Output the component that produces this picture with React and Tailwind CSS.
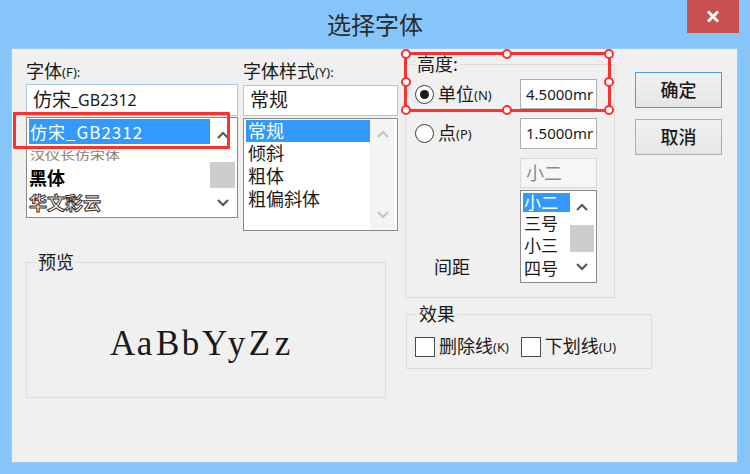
import React from 'react';

const UI_FONT = "[font-family:'Noto_Sans','Noto_Sans_CJK_SC',sans-serif]";

const Arrow = ({ up, color = '#555' }) => (
  <svg width="14" height="10" viewBox="0 0 14 10">
    <polyline
      points={up ? '2,8 7,3 12,8' : '2,2 7,7 12,2'}
      fill="none"
      stroke={color}
      strokeWidth="2"
    />
  </svg>
);

const Handle = ({ className }) => (
  <span className={`absolute w-[10px] h-[10px] rounded-full bg-white border-2 border-[#ff2d2d] ${className}`} />
);

const Radio = ({ checked }) => (
  <span className="w-[19px] h-[19px] rounded-full border border-[#3d3d3d] bg-white flex items-center justify-center shrink-0">
    {checked && <span className="w-[9px] h-[9px] rounded-full bg-[#1a1a1a]" />}
  </span>
);

const Checkbox = () => (
  <span className="block w-[20px] h-[20px] border border-[#4a4a4a] bg-white shrink-0" />
);

const App = () => {
  return (
    <div className={`relative w-[750px] h-[474px] bg-[#86c5fa] flex flex-col overflow-hidden ${UI_FONT}`}>
      {/* Title bar */}
      <div className="h-[48px] flex items-center justify-center">
        <span className="text-[24px] text-[#2b2b2b] leading-none mt-[2px]">选择字体</span>
      </div>
      <div className="absolute right-[11px] top-0 w-[52px] h-[33px] bg-[#c75050] flex items-center justify-center">
        <svg width="14" height="13" viewBox="0 0 14 13">
          <path d="M2 1.5 L12 11.5 M12 1.5 L2 11.5" stroke="#fff" strokeWidth="3" />
        </svg>
      </div>

      {/* Dialog body */}
      <div className="ml-[11px] mr-[12px] h-[415px] bg-[#f0f0f0] border border-[#9cc8ef] flex">
        {/* Left area */}
        <div className="ml-[14px] pt-[11px] flex flex-col">
          <div className="flex gap-[5px]">
            {/* Font column */}
            <div className="w-[212px] flex flex-col">
              <div className="h-[22px] flex items-end text-[#1a1a1a]">
                <span className="text-[18px] leading-[22px]">字体</span>
                <span className="text-[13px] leading-[20px]">(F):</span>
              </div>
              <div className="mt-[2px] h-[32px] bg-white border border-[#a8c8e8] flex items-center pl-[6px] text-[#1a1a1a]">
                <span className="text-[19px]">仿宋</span>
                <span className="text-[16px]">_GB2312</span>
              </div>
              <div className="mt-[1px] h-[101px] bg-white border border-[#8a8a8a] flex">
                <div className="flex-1 pl-[2px] pt-[1px] flex flex-col">
                  <div className="h-[25px] bg-[#3399ff] text-white flex items-center pl-[1px] text-[17px] [font-family:'Noto_Sans_CJK_SC','Liberation_Mono',monospace] tracking-[1px]">
                    仿宋_GB2312
                  </div>
                  <div className="h-[22px] flex items-center text-[15px] text-[#8a7a6a] scale-y-75 origin-left pl-[1px]">
                    汉仪长仿宋体
                  </div>
                  <div className="h-[25px] flex items-center text-[18px] font-semibold text-black">黑体</div>
                  <div className="h-[24px] flex items-center text-[18px] font-bold text-white [-webkit-text-stroke:1px_#3a2a1a]">
                    华文彩云
                  </div>
                </div>
                <div className="w-[25px] mr-[2px] flex flex-col items-center">
                  <div className="h-[30px] flex items-center justify-center mt-[2px]">
                    <Arrow up />
                  </div>
                  <div className="mt-[12px] w-full h-[26px] bg-[#cdcdcd]" />
                  <div className="flex-1 flex items-center justify-center">
                    <Arrow />
                  </div>
                </div>
              </div>
            </div>

            {/* Style column */}
            <div className="w-[155px] flex flex-col">
              <div className="h-[22px] flex items-end text-[#1a1a1a]">
                <span className="text-[18px] leading-[22px]">字体样式</span>
                <span className="text-[13px] leading-[20px]">(Y):</span>
              </div>
              <div className="mt-[3px] h-[31px] bg-white border border-[#a8c8e8] flex items-center pl-[6px] text-[19px] text-[#1a1a1a]">
                常规
              </div>
              <div className="mt-[2px] h-[113px] bg-white border border-[#8a8a8a] flex">
                <div className="flex-1 pl-[2px] pt-[1px] flex flex-col text-[18px] text-[#1a1a1a]">
                  <div className="h-[22px] bg-[#3399ff] text-white flex items-center pl-[2px]">常规</div>
                  <div className="h-[23px] flex items-center pl-[2px]">倾斜</div>
                  <div className="h-[23px] flex items-center pl-[2px]">粗体</div>
                  <div className="h-[23px] flex items-center pl-[2px]">粗偏斜体</div>
                </div>
                <div className="w-[25px] mr-[2px] bg-[#f4f4f4] flex flex-col items-center justify-between py-[10px]">
                  <Arrow up color="#c2c2c2" />
                  <Arrow color="#c2c2c2" />
                </div>
              </div>
            </div>
          </div>

          {/* Preview */}
          <fieldset className="mt-[20px] w-[360px] h-[147px] border border-[#dcdcdc]">
            <legend className="ml-[9px] px-[2px] text-[18px] leading-[22px] text-[#1a1a1a]">预览</legend>
            <div className="h-[118px] flex items-center justify-center">
              <div className="flex mr-[8px] mt-[22px] text-[35px] leading-none text-[#1a1a1a] [font-family:'Liberation_Serif',serif]">
                {'AaBbYyZz'.split('').map((c, i) => (
                  <span key={i} className="w-[23px] text-center">{c}</span>
                ))}
              </div>
            </div>
          </fieldset>
        </div>

        {/* Right area */}
        <div className="ml-[7px] pt-[4px] flex flex-col">
          <div className="flex">
            {/* Height group */}
            <fieldset className="w-[210px] h-[245px] border border-[#dcdcdc] flex flex-col pl-[9px]">
              <legend className="ml-[0px] px-[2px] text-[18px] leading-[22px] text-[#1a1a1a]">高度:</legend>
              <div className="mt-[4px] flex items-center h-[30px]">
                <div className="w-[105px] flex items-center gap-[4px]">
                  <Radio checked />
                  <span className="text-[18px] text-[#1a1a1a]">单位</span>
                  <span className="text-[13px] text-[#1a1a1a] mt-[3px] ml-[-4px]">(N)</span>
                </div>
                <div className="w-[77px] h-[30px] bg-white border border-[#abadb3] flex items-center pl-[5px] whitespace-nowrap text-[15px] text-[#1a1a1a]">
                  4.5000mr
                </div>
              </div>
              <div className="mt-[9px] flex items-center h-[31px]">
                <div className="w-[105px] flex items-center gap-[4px]">
                  <Radio />
                  <span className="text-[18px] text-[#1a1a1a]">点</span>
                  <span className="text-[13px] text-[#1a1a1a] mt-[3px] ml-[-4px]">(P)</span>
                </div>
                <div className="w-[77px] h-[31px] bg-white border border-[#abadb3] flex items-center pl-[5px] whitespace-nowrap text-[15px] text-[#1a1a1a]">
                  1.5000mr
                </div>
              </div>
              <div className="mt-[9px] ml-[105px] w-[77px] h-[30px] bg-[#f6f6f6] border border-[#d9d9d9] flex items-center pl-[5px] text-[18px] text-[#8c8c8c]">
                小二
              </div>
              <div className="mt-[2px] flex items-end">
                <div className="w-[105px] pl-[19px] pb-[2px] text-[18px] text-[#1a1a1a]">间距</div>
                <div className="w-[77px] h-[93px] bg-white border border-[#8a8a8a] flex">
                  <div className="flex-1 pl-[2px] pt-[2px] flex flex-col text-[17px] text-[#1a1a1a]">
                    <div className="h-[19px] bg-[#3399ff] text-white flex items-center pl-[1px] leading-none">小二</div>
                    <div className="h-[23px] flex items-center pl-[1px]">三号</div>
                    <div className="h-[22px] flex items-center pl-[1px]">小三</div>
                    <div className="h-[23px] flex items-center pl-[1px]">四号</div>
                  </div>
                  <div className="w-[24px] mr-[2px] flex flex-col items-center">
                    <div className="h-[28px] flex items-center justify-center mt-[2px]">
                      <Arrow up />
                    </div>
                    <div className="mt-[4px] w-full h-[27px] bg-[#cdcdcd]" />
                    <div className="flex-1 flex items-center justify-center">
                      <Arrow />
                    </div>
                  </div>
                </div>
              </div>
            </fieldset>

            {/* Buttons */}
            <div className="ml-[20px] mt-[19px] flex flex-col gap-[11px]">
              <button className="w-[87px] h-[36px] border border-[#4a9de6] bg-gradient-to-b from-[#f2f2f2] to-[#e5e5e5] text-[18px] text-[#1a1a1a] font-medium">
                确定
              </button>
              <button className="w-[87px] h-[36px] border border-[#adadad] bg-gradient-to-b from-[#f2f2f2] to-[#e5e5e5] text-[18px] text-[#1a1a1a] font-medium">
                取消
              </button>
            </div>
          </div>

          {/* Effects */}
          <fieldset className="mt-[5px] ml-[1px] w-[246px] h-[66px] border border-[#dcdcdc] pl-[8px]">
            <legend className="ml-[2px] px-[2px] text-[18px] leading-[22px] text-[#1a1a1a]">效果</legend>
            <div className="mt-[8px] flex items-center">
              <Checkbox />
              <span className="ml-[4px] text-[18px] text-[#1a1a1a]">删除线</span>
              <span className="text-[13px] text-[#1a1a1a] mt-[3px]">(K)</span>
              <span className="ml-[12px] flex">
                <Checkbox />
              </span>
              <span className="ml-[4px] text-[18px] text-[#1a1a1a]">下划线</span>
              <span className="text-[13px] text-[#1a1a1a] mt-[3px]">(U)</span>
            </div>
          </fieldset>
        </div>
      </div>

      {/* Annotation: font list highlight */}
      <div className="absolute left-[13px] top-[112px] w-[217px] h-[37px] border-[3px] border-[#ff3030] rounded-[1px]" />

      {/* Annotation: height selection with handles */}
      <div className="absolute left-[404px] top-[52px] w-[207px] h-[60px] border-[3px] border-[#ff3030]">
        <Handle className="left-[-6px] top-[-6px]" />
        <Handle className="left-[95px] top-[-6px]" />
        <Handle className="right-[-6px] top-[-6px]" />
        <Handle className="left-[-6px] top-[22px]" />
        <Handle className="right-[-6px] top-[22px]" />
        <Handle className="left-[-6px] bottom-[-6px]" />
        <Handle className="left-[95px] bottom-[-6px]" />
        <Handle className="right-[-6px] bottom-[-6px]" />
      </div>
    </div>
  );
};

export default App;
